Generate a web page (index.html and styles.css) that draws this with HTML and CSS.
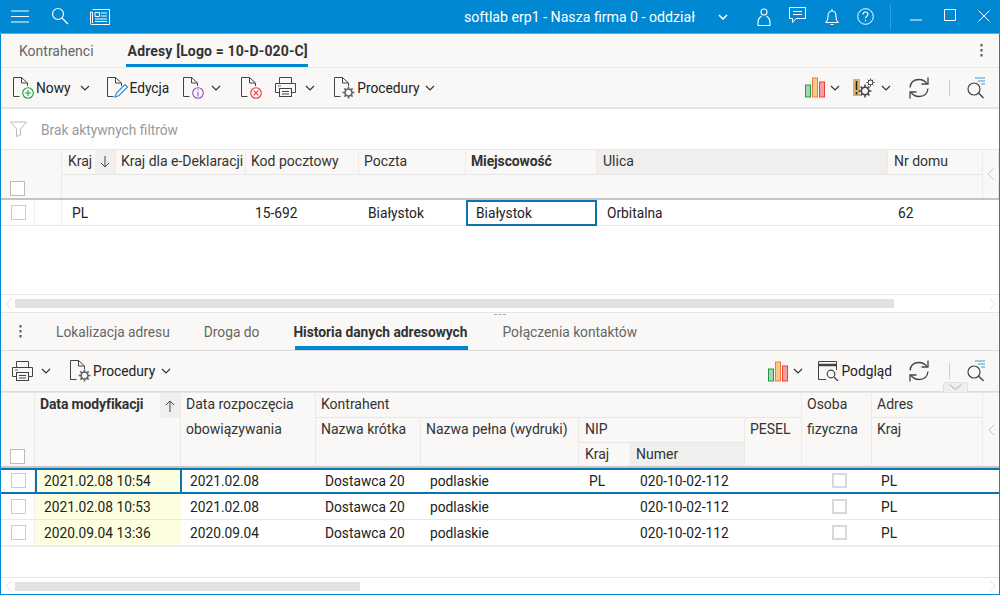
FILE: index.html
```html
<!DOCTYPE html>
<html lang="pl">
<head>
<meta charset="utf-8">
<title>softlab erp1</title>
<link rel="stylesheet" href="styles.css">
</head>
<body>
<svg class="defs" width="0" height="0">
  <symbol id="chev" viewBox="0 0 10 6"><path d="M1 1l4 4 4-4" fill="none" stroke="#333" stroke-width="1.2"/></symbol>
  <symbol id="doc" viewBox="0 0 22 22"><path d="M7.5 19.5H1.5V.5H9.5L15.5 6V9M9.5.5V6H15.5M15.5 6" fill="none" stroke="#444" stroke-width="1"/></symbol>
  <symbol id="chart" viewBox="0 0 21 21">
    <rect x=".5" y="8" width="5" height="12" fill="#a5d6b0" stroke="#1c9a4c"/>
    <rect x="7.5" y="1" width="5" height="19" fill="#f8c98c" stroke="#ef7d31"/>
    <rect x="14.5" y="5" width="5" height="15" fill="#f5a0a0" stroke="#ea4040"/>
  </symbol>
  <symbol id="refresh" viewBox="0 0 22 22" >
    <path d="M2 10.5C2.5 5.5 6 2.5 11 2.5c3.500 0 6 1.500 8 4M20 11.500c-.5 5-4 8-9 8-3.500 0-6-1.500-8-4" fill="none" stroke="#444" stroke-width="1.300"/>
    <path d="M20 .5v6.500h-6.500M2 21.500V15h6.500" fill="none" stroke="#444" stroke-width="1.300"/>
  </symbol>
  <symbol id="find" viewBox="0 0 20 22">
    <path d="M9 1h10M12 4h7M15 7h4" fill="none" stroke="#3d9ad9" stroke-width="1.100"/>
    <circle cx="8" cy="12" r="6" fill="none" stroke="#444" stroke-width="1.200"/>
    <path d="M12.500 16l5 5" stroke="#444" stroke-width="1.400"/>
  </symbol>
  <symbol id="print" viewBox="0 0 21 21">
    <path d="M4.500 6.500V.5h12v6M4.500 15.500H.5v-9h20v9h-4" fill="none" stroke="#444"/>
    <path d="M3 9h3" stroke="#1e88d0"/>
    <rect x="4.500" y="11.500" width="12" height="8" fill="#f9f8f6" stroke="#444"/>
    <path d="M7 14.500h7M7 17h7" stroke="#444"/>
  </symbol>
  <symbol id="gear" viewBox="0 0 12 12">
    <circle cx="6" cy="6" r="3.200" fill="none" stroke="#666" stroke-width="1.500"/>
    <path d="M6 .5v2.500M6 9v2.500M.5 6H3M9 6h2.500M2.200 2.200L4 4M8 8l1.800 1.800M2.200 9.800L4 8M8 4l1.800-1.800" stroke="#666" stroke-width="1.500"/>
  </symbol>
  <symbol id="gear-dark" viewBox="0 0 12 12">
    <circle cx="6" cy="6" r="3.200" fill="none" stroke="#444" stroke-width="1.300"/>
    <path d="M6 .5v2.500M6 9v2.500M.5 6H3M9 6h2.500M2.200 2.200L4 4M8 8l1.800 1.800M2.200 9.800L4 8M8 4l1.800-1.800" stroke="#444" stroke-width="1.300"/>
  </symbol>
</svg>

<div class="app">
  <header class="title">
    <svg class="ti ti-menu" width="18" height="13" viewBox="0 0 18 13"><path d="M0 1h18M0 6.500h18M0 12h18" stroke="#fff"/></svg>
    <svg class="ti ti-search" width="18" height="18" viewBox="0 0 18 18"><circle cx="7" cy="7" r="5.500" fill="none" stroke="#fff" stroke-width="1.200"/><path d="M11 11l6 6" stroke="#fff" stroke-width="1.300"/></svg>
    <svg class="ti ti-news" width="20" height="16" viewBox="0 0 20 16"><path d="M2.500.5h17v15H1.500a1 1 0 0 1-1-1V3h2v11" fill="none" stroke="#fff"/><path d="M5 3.500h4.500v4H5z" fill="none" stroke="#fff"/><path d="M11 4h6M11 7h6M5 10h12M5 12.500h12" stroke="#fff"/></svg>
    <div class="title-text">softlab erp1 - Nasza firma 0 - oddział</div>
    <svg class="ti ti-chev" width="10" height="6" viewBox="0 0 10 6"><path d="M1 1l4 4 4-4" fill="none" stroke="#fff" stroke-width="1.600"/></svg>
    <svg class="ti ti-user" width="14" height="18" viewBox="0 0 14 18"><circle cx="7" cy="4" r="3" fill="none" stroke="#fff" stroke-width="1.100"/><path d="M1 17v-2c0-4 2-6 3.500-7M13 17v-2c0-4-2-6-3.500-7M.5 17.500h13" fill="none" stroke="#fff" stroke-width="1.100"/></svg>
    <svg class="ti ti-chat" width="17" height="17" viewBox="0 0 17 17"><path d="M.5.500h16v11H7l-3.500 4v-4H.5z" fill="none" stroke="#fff"/><path d="M4 4.500h9M4 7.500h9" stroke="#fff"/></svg>
    <svg class="ti ti-bell" width="14" height="18" viewBox="0 0 14 18"><path d="M1 14.500c1.500-1.500 2-3 2-6 0-3 1.500-5.500 4-5.500s4 2.500 4 5.500c0 3 .5 4.500 2 6zM7 3V1M5.500 16.500h3" fill="none" stroke="#fff" stroke-width="1.100"/></svg>
    <svg class="ti ti-help" width="17" height="17" viewBox="0 0 17 17"><circle cx="8.500" cy="8.500" r="7.800" fill="none" stroke="#fff"/><path d="M6 6.500c0-1.500 1-2.500 2.500-2.500s2.500 1 2.500 2.300c0 2-2.500 2-2.500 4" fill="none" stroke="#fff" stroke-width="1.100"/><path d="M8.500 11.800v1.500" stroke="#fff" stroke-width="1.100"/></svg>
    <span class="ti-sep"></span>
    <svg class="ti ti-min" width="12" height="2" viewBox="0 0 12 2"><path d="M0 1h12" stroke="#fff"/></svg>
    <svg class="ti ti-max" width="12" height="12" viewBox="0 0 12 12"><path d="M.5.500h11v11H.5z" fill="none" stroke="#fff"/></svg>
    <svg class="ti ti-close" width="12" height="12" viewBox="0 0 12 12"><path d="M.5.500l11 11M11.500.500l-11 11" stroke="#fff"/></svg>
  </header>

  <nav class="tabs tabs-top">
    <a class="tab tab-kontr">Kontrahenci</a>
    <a class="tab tab-active tab-adresy">Adresy [Logo = 10-D-020-C]</a>
    <svg class="dots dots-right" width="3" height="13" viewBox="0 0 3 13"><path d="M1.500 0v2.500M1.500 5v2.500M1.500 10v2.500" stroke="#555" stroke-width="2"/></svg>
  </nav>

  <div class="toolbar">
    <span class="tool t-nowy">
      <span class="docico"><svg width="22" height="22"><use href="#doc"/></svg><svg class="badge" width="12" height="12" viewBox="0 0 12 12"><circle cx="6" cy="6" r="5.300" fill="#f9f8f6" stroke="#1aa34a" stroke-width="1.100"/><path d="M6 3v6M3 6h6" stroke="#1aa34a" stroke-width="1.100"/></svg></span>
      <span class="lbl lbl-gap">Nowy</span>
    </span>
    <svg class="chev chev-nowy" width="10" height="6"><use href="#chev"/></svg>
    <span class="tool t-edycja">
      <span class="docico"><svg width="22" height="22"><use href="#doc"/></svg><svg class="badge badge-pen" width="15" height="15" viewBox="0 0 15 15"><path d="M1 14l1.500-4L11 1.500 13.500 4 5 12.500z" fill="#fff" stroke="#2d8fd8" stroke-width="1.200"/></svg></span>
      <span class="lbl lbl-gap">Edycja</span>
    </span>
    <span class="tool t-info">
      <span class="docico"><svg width="22" height="22"><use href="#doc"/></svg><svg class="badge" width="12" height="12" viewBox="0 0 12 12"><circle cx="6" cy="6" r="5.300" fill="#f9f8f6" stroke="#a24ac0" stroke-width="1.100"/><path d="M6 5v4.500M6 2.500v1.300" stroke="#a24ac0" stroke-width="1.100"/></svg></span>
    </span>
    <svg class="chev chev-info" width="10" height="6"><use href="#chev"/></svg>
    <span class="tool t-del">
      <span class="docico"><svg width="22" height="22"><use href="#doc"/></svg><svg class="badge" width="12" height="12" viewBox="0 0 12 12"><circle cx="6" cy="6" r="5.300" fill="#f9f8f6" stroke="#e8383c" stroke-width="1.100"/><path d="M3.700 3.700l4.600 4.600M8.300 3.700L3.700 8.300" stroke="#e8383c" stroke-width="1.100"/></svg></span>
    </span>
    <svg class="ico t-print" width="21" height="21"><use href="#print"/></svg>
    <svg class="chev chev-print" width="10" height="6"><use href="#chev"/></svg>
    <span class="tool t-proc">
      <span class="docico"><svg width="22" height="22"><use href="#doc"/></svg><svg class="badge" width="13" height="13"><use href="#gear"/></svg></span>
      <span class="lbl lbl-gap">Procedury</span>
    </span>
    <svg class="chev chev-proc" width="10" height="6"><use href="#chev"/></svg>
    <span class="grow"></span>
    <svg class="ico" width="21" height="21"><use href="#chart"/></svg>
    <svg class="chev chev-chart" width="10" height="6"><use href="#chev"/></svg>
    <svg class="ico t-warn" width="22" height="20" viewBox="0 0 22 20">
      <rect x="0" y="1" width="7" height="17" fill="#d9b365"/>
      <path d="M3.500 3v9M3.500 14v2.500" stroke="#222" stroke-width="1.500"/>
      <use href="#gear-dark" x="13" y="0" width="9" height="9"/>
      <use href="#gear-dark" x="5" y="6" width="14" height="14"/>
    </svg>
    <svg class="chev chev-warn" width="10" height="6"><use href="#chev"/></svg>
    <svg class="ico t-refresh" width="22" height="22"><use href="#refresh"/></svg>
    <span class="vsep"></span>
    <svg class="ico t-find" width="20" height="22"><use href="#find"/></svg>
  </div>

  <section class="pane pane-top">
    <div class="filter">
      <svg width="17" height="16" viewBox="0 0 17 16"><path d="M.5 1h16L10.500 8v6l-4 1.500V8z" fill="none" stroke="#bbb"/></svg>
      <span>Brak aktywnych filtrów</span>
    </div>

    <div class="grid g1 g1-head">
      <div class="h g1-corner"><span class="check check-head"></span></div>
      <div class="h hr1 g1-kraj">Kraj<span class="sort"><svg width="10" height="12" viewBox="0 0 10 12"><path d="M5 0v11M1 7l4 4 4-4" fill="none" stroke="#444"/></svg></span></div>
      <div class="h hr1 h5">Kraj dla e-Deklaracji</div>
      <div class="h hr1 h5">Kod pocztowy</div>
      <div class="h hr1 h5">Poczta</div>
      <div class="h hr1 h5 bold">Miejscowość</div>
      <div class="h hr1 shaded">Ulica</div>
      <div class="h hr1">Nr domu</div>
      <div class="h g1-coll"><svg width="7" height="12" viewBox="0 0 7 12"><path d="M6.500.5L1 6l5.500 5.500" fill="none" stroke="#c8c8c8"/></svg></div>
      <div class="g1-filter"></div>
    </div>
    <div class="grid g1 g1-row">
      <div class="c c-check"><span class="check"></span></div>
      <div class="c c-line"></div>
      <div class="c">PL</div>
      <div class="c"></div>
      <div class="c c9">15-692</div>
      <div class="c c9">Białystok</div>
      <div class="c c-focus">Białystok</div>
      <div class="c">Orbitalna</div>
      <div class="c">62</div>
      <div class="c"></div>
    </div>
    <div class="grow"></div>
    <div class="hscroll">
      <svg width="7" height="12" viewBox="0 0 7 12"><path d="M6.500.5L1 6l5.500 5.500" fill="none" stroke="#ddd"/></svg>
      <span class="thumb thumb-top"></span>
      <span class="grow"></span>
      <svg width="7" height="12" viewBox="0 0 7 12"><path d="M.5.500L6 6 .5 11.500" fill="none" stroke="#ddd"/></svg>
    </div>
  </section>

  <span class="split-grip"></span>

  <nav class="tabs tabs-low">
    <svg class="dots dots-left" width="3" height="13" viewBox="0 0 3 13"><path d="M1.500 0v2.500M1.500 5v2.500M1.500 10v2.500" stroke="#555" stroke-width="2"/></svg>
    <a class="tab tab-lok">Lokalizacja adresu</a>
    <a class="tab tab-droga">Droga do</a>
    <a class="tab tab-active tab-hist">Historia danych adresowych</a>
    <a class="tab tab-pol">Połączenia kontaktów</a>
  </nav>

  <div class="toolbar toolbar-low">
    <svg class="ico t-print2" width="21" height="21"><use href="#print"/></svg>
    <svg class="chev chev-print2" width="10" height="6"><use href="#chev"/></svg>
    <span class="tool t-proc2">
      <span class="docico"><svg width="22" height="22"><use href="#doc"/></svg><svg class="badge" width="13" height="13"><use href="#gear"/></svg></span>
      <span class="lbl lbl-gap">Procedury</span>
    </span>
    <svg class="chev chev-proc" width="10" height="6"><use href="#chev"/></svg>
    <span class="grow"></span>
    <svg class="ico" width="21" height="21"><use href="#chart"/></svg>
    <svg class="chev chev-chart" width="10" height="6"><use href="#chev"/></svg>
    <svg class="ico t-prev" width="21" height="20" viewBox="0 0 21 20"><path d="M8 18.500H.5V.5h18V9" fill="none" stroke="#444"/><path d="M1 4h17" stroke="#444" stroke-width="2.500"/><circle cx="13" cy="13" r="3.800" fill="none" stroke="#444" stroke-width="1.200"/><path d="M16 16l4 4" stroke="#444" stroke-width="1.300"/></svg>
    <span class="lbl lbl-prev">Podgląd</span>
    <svg class="ico t-refresh2" width="22" height="22"><use href="#refresh"/></svg>
    <span class="vsep"></span>
    <svg class="ico t-find" width="20" height="22"><use href="#find"/></svg>
    <span class="pull"><svg width="13" height="6" viewBox="0 0 13 6"><path d="M.5.500l6 5 6-5" fill="none" stroke="#aaa"/></svg></span>
  </div>

  <section class="pane pane-low">
    <div class="grid g2 g2-head">
      <div class="h g2-corner"><span class="check check-head"></span></div>
      <div class="h g2-data bold"><span class="data-lbl">Data modyfikacji</span><span class="sort sort-up"><svg width="10" height="12" viewBox="0 0 10 12"><path d="M5 12V1M1 5l4-4 4 4" fill="none" stroke="#444"/></svg></span></div>
      <div class="h g2-rozp">Data rozpoczęcia<br>obowiązywania</div>
      <div class="h g2-kontr">Kontrahent</div>
      <div class="h g2-kr">Nazwa krótka</div>
      <div class="h g2-pel">Nazwa pełna (wydruki)</div>
      <div class="h g2-nip">NIP</div>
      <div class="h g2-nk">Kraj</div>
      <div class="h g2-nn shaded">Numer</div>
      <div class="h g2-pes">PESEL</div>
      <div class="h g2-os">Osoba<br>fizyczna</div>
      <div class="h g2-adr">Adres</div>
      <div class="h g2-ak">Kraj</div>
      <div class="h g2-coll"><svg width="7" height="12" viewBox="0 0 7 12"><path d="M6.500.5L1 6l5.500 5.500" fill="none" stroke="#c8c8c8"/></svg></div>
    </div>
    <div class="grid g2 g2-row g2-sel">
      <div class="c c-check"><span class="check"></span></div>
      <div class="c c-date c-focus2">2021.02.08 10:54</div>
      <div class="c">2021.02.08</div>
      <div class="c">Dostawca 20</div>
      <div class="c">podlaskie</div>
      <div class="c c-p11">PL</div>
      <div class="c">020-10-02-112</div>
      <div class="c"></div>
      <div class="c c-ck"><span class="check"></span></div>
      <div class="c">PL</div>
      <div class="c"></div>
    </div>
    <div class="grid g2 g2-row">
      <div class="c c-check"><span class="check"></span></div>
      <div class="c c-date">2021.02.08 10:53</div>
      <div class="c">2021.02.08</div>
      <div class="c">Dostawca 20</div>
      <div class="c">podlaskie</div>
      <div class="c"></div>
      <div class="c">020-10-02-112</div>
      <div class="c"></div>
      <div class="c c-ck"><span class="check"></span></div>
      <div class="c">PL</div>
      <div class="c"></div>
    </div>
    <div class="grid g2 g2-row g2-last">
      <div class="c c-check"><span class="check"></span></div>
      <div class="c c-date">2020.09.04 13:36</div>
      <div class="c">2020.09.04</div>
      <div class="c">Dostawca 20</div>
      <div class="c">podlaskie</div>
      <div class="c"></div>
      <div class="c">020-10-02-112</div>
      <div class="c"></div>
      <div class="c c-ck"><span class="check"></span></div>
      <div class="c">PL</div>
      <div class="c"></div>
    </div>
    <div class="grow"></div>
    <div class="hscroll hscroll-low">
      <svg width="7" height="12" viewBox="0 0 7 12"><path d="M6.500.5L1 6l5.500 5.500" fill="none" stroke="#ddd"/></svg>
      <span class="thumb thumb-low"></span>
      <span class="grow"></span>
      <svg width="7" height="12" viewBox="0 0 7 12"><path d="M.5.500L6 6 .5 11.500" fill="none" stroke="#ddd"/></svg>
    </div>
  </section>
</div>
</body>
</html>
```

FILE: styles.css
```css
* { box-sizing: border-box; }
html, body { margin: 0; padding: 0; height: 100%; background: #fff; overflow: hidden; }
body { font-family: Roboto, "Liberation Sans", sans-serif; font-size: 14px; color: #222; }
.defs { position: absolute; }
svg { display: block; flex: none; }
.grow { flex: 1 1 auto; }

.app { position: relative; width: 1000px; height: 595px; display: flex; flex-direction: column; border: 1px solid #0089d2; border-top: 0; background: #fff; }

/* title bar */
.title { height: 34px; margin: 0 -1px; flex: none; display: flex; align-items: center; background: #0089d2; border-bottom: 1px solid #4fb0e4; color: #fff; }
.title-text { font-size: 14.15px; margin-left: 354px; white-space: nowrap; width: 231px; }
.ti-menu { margin-left: 11px; margin-top: -1px; }
.ti-search { margin-left: 22px; margin-top: -1px; }
.ti-news { margin-left: 21px; }
.ti-chev { margin-left: 23px; }
.ti-user { margin-left: 29px; }
.ti-chat { margin-left: 18px; margin-top: -2px; }
.ti-bell { margin-left: 19px; }
.ti-help { margin-left: 18px; }
.ti-sep { width: 1px; height: 26px; background: #2aa0de; margin-left: 16px; }
.ti-min { margin-left: 19px; margin-top: 6px; }
.ti-max { margin-left: 22px; margin-top: -3px; }
.ti-close { margin-left: 22px; margin-top: -1px; }

/* tabs */
.tabs { flex: none; display: flex; align-items: stretch; background: #f9f8f6; color: #666; }
.tabs-top { height: 34px; border-bottom: 1px solid #e8e8e8; }
.tabs-low { height: 38px; border-bottom: 1px solid #dcdcdc; font-size: 13.75px; }
.tab { display: flex; align-items: center; padding: 0 1px; white-space: nowrap; }
.tab-active { font-weight: 700; color: #333; padding-top: 3px; }
.tab-adresy { margin-left: 31px; padding: 3px 0 0 2px; letter-spacing: .01em; border-bottom: 3px solid #0089d2; height: 33px; }
.tab-kontr { margin-left: 17px; }
.dots { align-self: center; }
.dots-right { margin-left: auto; margin-right: 16px; }
.dots-left { margin-left: 18px; }
.tab-lok { margin-left: 33px; }
.tab-droga { margin-left: 32px; }
.tab-hist { margin-left: 33px; padding: 3px 1px 3px 0; height: 37px; background: linear-gradient(#0089d2, #0089d2) 2px 100% / calc(100% - 2px) 4px no-repeat; }
.tab-pol { margin-left: 33px; }

/* toolbars */
.toolbar { flex: none; height: 41px; display: flex; align-items: center; background: #f9f8f6; border-bottom: 2px solid #e4e4e4; padding-right: 13px; position: relative; }
.toolbar-low { border-bottom: 1px solid #dcdcdc; }
.tool { display: flex; align-items: center; }
.docico { position: relative; width: 22px; height: 22px; display: block; }
.badge { position: absolute; right: 0; bottom: 0; }
.badge-pen { right: -1px; bottom: 1px; }
.lbl { white-space: nowrap; color: #222; font-size: 13.75px; }
.lbl-gap { margin-left: 2px; }
.t-nowy { margin-left: 11px; }
.chev-nowy { margin-left: 9px; }
.t-edycja { margin-left: 16px; }
.t-info { margin-left: 13px; }
.chev-info { margin-left: 7px; }
.t-del { margin-left: 19px; }
.t-print { margin-left: 13px; }
.chev-print { margin-left: 9px; }
.t-proc { margin-left: 18px; }
.chev-proc { margin-left: 6px; }
.chev-chart { margin-left: 4px; }
.t-warn { margin-left: 13px; }
.chev-warn { margin-left: 6px; }
.t-refresh { margin-left: 17px; }
.t-refresh2 { margin-left: 16px; }
.vsep { width: 1px; height: 16px; background: #ccc; margin-left: 19px; }
.t-find { margin-left: 16px; }
.t-print2 { margin-left: 11px; }
.chev-print2 { margin-left: 8px; }
.t-proc2 { margin-left: 18px; }
.t-prev { margin-left: 15px; }
.lbl-prev { margin-left: 3px; }
.pull { position: absolute; left: 942px; top: 31px; width: 25px; height: 10px; background: #efefef; border: 1px solid #e0e0e0; border-bottom: 0; border-radius: 3px 3px 0 0; display: flex; justify-content: center; padding-top: 1px; }
.split-grip { position: absolute; left: 493px; top: 314px; width: 12px; height: 1px; border-top: 1px dashed #aaa; }

/* panes */
.pane { display: flex; flex-direction: column; min-height: 0; background: #fff; }
.pane-top { flex: none; height: 204px; }
.pane-low { flex: 1 1 auto; }
.filter { height: 40px; flex: none; display: flex; align-items: center; padding-left: 9px; color: #999; font-size: 13.75px; }
.filter span { margin-left: 14px; padding-top: 2px; }

/* grids */
.grid { display: grid; flex: none; }
.g1 { grid-template-columns: 34px 27px 54px 130px 113px 107px 131px 291px 95px 16px; }
.g2 { grid-template-columns: 34px 146px 135px 105px 158px 52px 114px 57px 70px 111px 16px; }

.g1-head { grid-template-rows: 25px 23px; background: #f9f8f6; border-top: 1px solid #e6e6e6; border-bottom: 2px solid #c4c4c4; height: 51px; }
.g2-head { grid-template-rows: 25px 25px 23px; background: #f9f8f6; border-top: 1px solid #e6e6e6; border-bottom: 2px solid #c4c4c4; height: 76px; }

.h { padding: 0 6px; line-height: 23px; white-space: nowrap; overflow: hidden; color: #333; border-right: 1px solid #ebebeb; position: relative; }
.h5 { padding-left: 5px; }
.hr1 { border-bottom: 1px solid #e6e6e6; }
.bold { font-weight: 700; letter-spacing: -.01em; }
.shaded { background: #f0efed; }
.g1-corner { grid-column: 1 / 3; grid-row: 1 / 3; position: relative; display: flex; align-items: flex-end; padding: 0 0 2px 9px; }
.g1-kraj { display: flex; justify-content: space-between; padding-right: 0; }
.sort { width: 20px; background: #f0efed; display: flex; align-items: center; justify-content: center; height: 100%; }
.g1-coll { grid-column: 10; grid-row: 1 / 3; display: flex; align-items: center; justify-content: center; padding: 0; }
.g1-filter { grid-column: 3 / 10; grid-row: 2; border-right: 1px solid #ebebeb; }

.c { padding: 1px 0 0 10px; line-height: 24px; white-space: nowrap; color: #222; min-width: 0; font-size: 13.75px; }
.c9 { padding-left: 9px; }
.c-p11 { padding-left: 11px; }
.c-check { padding: 5px 0 0 10px; border-right: 1px solid #eee; }
.c-line { border-right: 1px solid #eee; }
.g1-row { height: 26px; border-bottom: 1px solid #e8e8e8; }
.c-focus { border: 2px solid #0b75b0; margin-left: 0; padding: 0 0 0 8px; line-height: 22px; margin-bottom: -1px; }
.check { display: block; width: 15px; height: 15px; background: #fff; border: 1px solid #ccc; }
.check-head { width: 15px; height: 15px; border-color: #bbb; }

.g2-head .h { padding-left: 5px; padding-right: 5px; }
.g2-head .g2-corner { grid-column: 1; grid-row: 1 / 4; display: flex; align-items: flex-end; padding: 0 0 2px 9px; }
.g2-head .g2-data { grid-column: 2; grid-row: 1 / 4; padding: 0; display: flex; align-items: flex-start; justify-content: space-between; }
.data-lbl { padding-left: 5px; }
.sort-up { height: 25px; }
.g2-head .g2-rozp { grid-column: 3; grid-row: 1 / 4; line-height: 25px; padding-bottom: 0; margin-top: -1px; }
.g2-kontr { grid-column: 4 / 9; grid-row: 1; border-bottom: 1px solid #e6e6e6; }
.g2-kr { grid-column: 4; grid-row: 2 / 4; }
.g2-pel { grid-column: 5; grid-row: 2 / 4; }
.g2-head .g2-nip { grid-column: 6 / 8; grid-row: 2; border-bottom: 1px solid #e6e6e6; padding-left: 6px; }
.g2-head .g2-nk { grid-column: 6; grid-row: 3; padding-left: 6px; }
.g2-nn { grid-column: 7; grid-row: 3; }
.g2-pes { grid-column: 8; grid-row: 2 / 4; }
.g2-head .g2-os { grid-column: 9; grid-row: 1 / 4; line-height: 25px; margin-top: -1px; }
.g2-adr { grid-column: 10; grid-row: 1; border-bottom: 1px solid #e6e6e6; }
.g2-ak { grid-column: 10; grid-row: 2 / 4; }
.g2-head .g2-coll { grid-column: 11; grid-row: 1 / 4; display: flex; align-items: center; justify-content: center; padding: 0; border-right: 0; }

.g2-row { height: 26px; border-bottom: 1px solid #e8e8e8; }
.g2-row .c { padding-left: 9px; }
.g2-row .c-p11 { padding-left: 10px; }
.g2-row .c-check { padding: 5px 0 0 10px; }
.g2-sel { border-top: 2px solid #0b75b0; border-bottom: 2px solid #0b75b0; height: 26px; }
.g2-sel .c { line-height: 21px; }
.g2-row.g2-sel .c-check { padding-top: 3px; }
.g2-last { border-bottom: 2px solid #eee; height: 27px; }
.c-date { background: #fdfee0; }
.g2-row .c-focus2 { border-left: 2px solid #0b75b0; border-right: 2px solid #0b75b0; padding-left: 7px; margin-right: -1px; }
.g2-row .c-ck { padding: 5px 0 0 30px; }
.g2-row.g2-sel .c-ck { padding-top: 3px; }
.c-ck .check { border-width: 2px; border-color: #d8d8d8; }

/* scrollbars */
.hscroll { flex: none; height: 19px; display: flex; align-items: center; border-top: 1px solid #e6e6e6; border-bottom: 1px solid #e6e6e6; padding: 0 3px 0 4px; }
.hscroll-low { height: 17px; border-bottom: 0; }
.thumb { height: 9px; background: #e2e2e2; margin-left: 3px; }
.thumb-top { width: 879px; }
.thumb-low { width: 345px; }
```
